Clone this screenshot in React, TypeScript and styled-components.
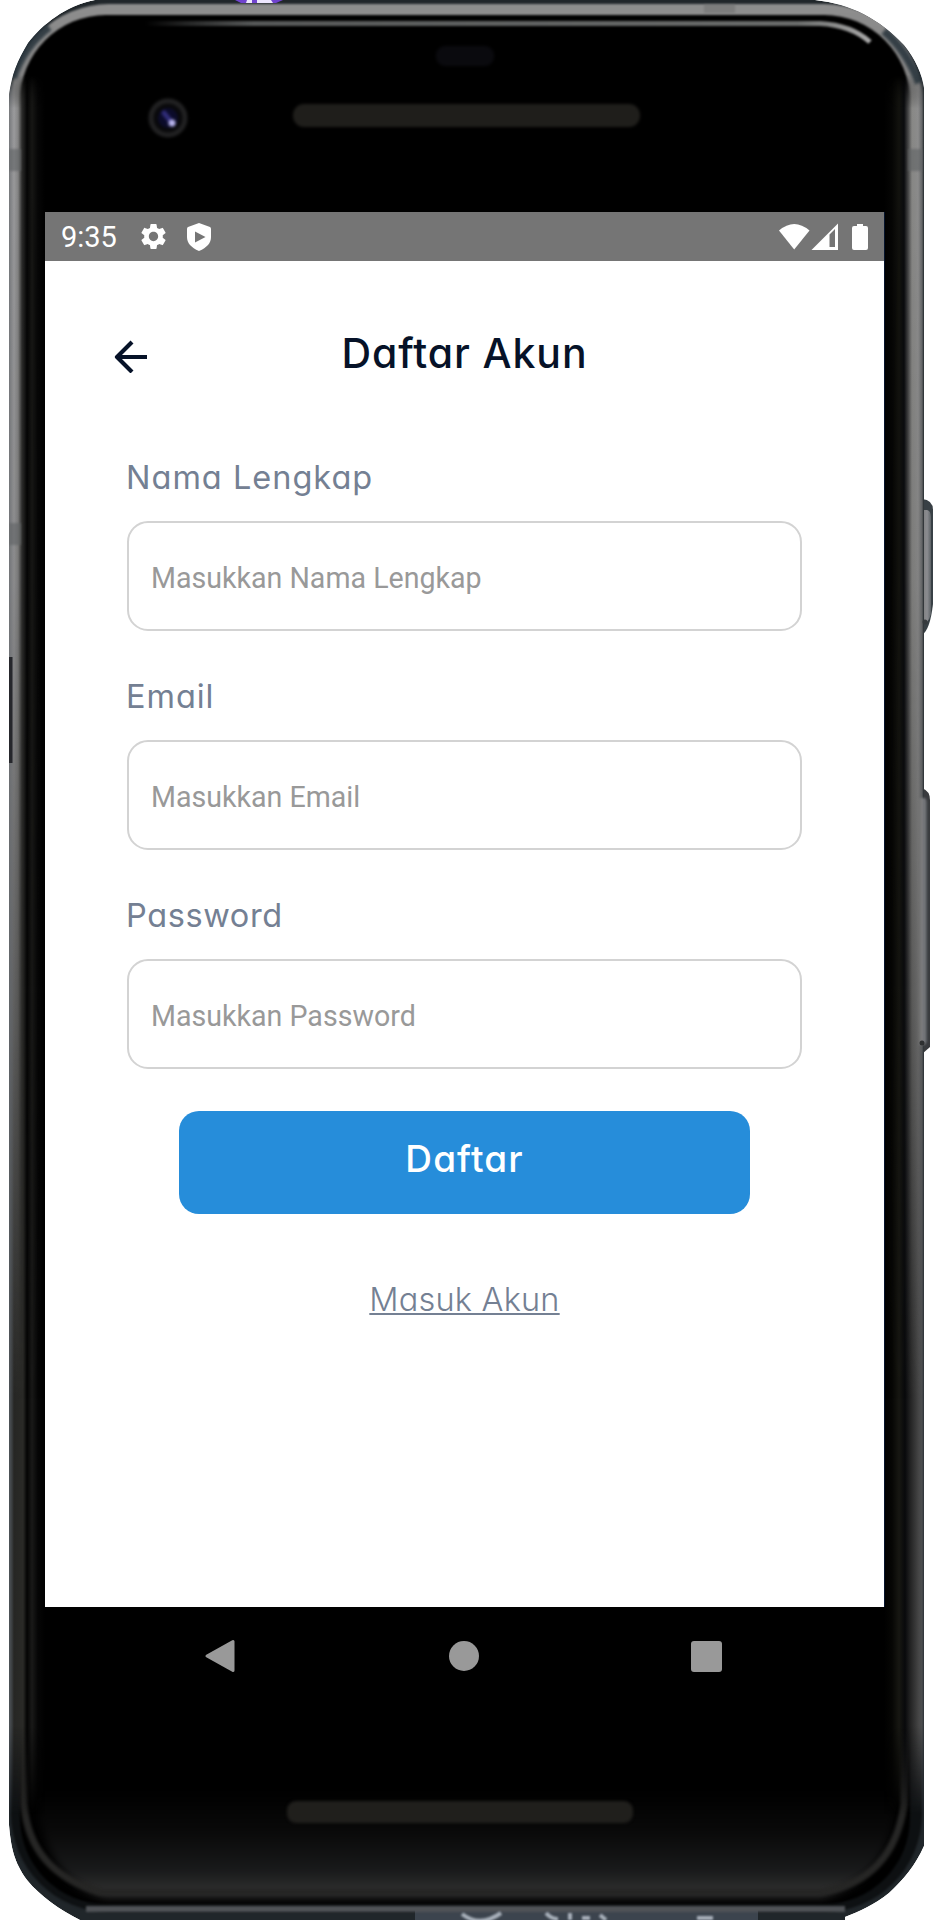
import React from 'react';
import styled, { createGlobalStyle } from 'styled-components';
import { MdSettings } from 'react-icons/md';

const GlobalStyle = createGlobalStyle`
  * { box-sizing: border-box; }
  body { margin: 0; background: #fff; overflow: hidden; }
`;

const geometric = `Inter, "Open Sans", sans-serif`;

const Device = styled.div`
  position: relative;
  width: 936px;
  height: 1920px;
  padding: 212px 52px 0 45px;
  overflow: hidden;
  background: #fff;
`;

const Hardware = styled.svg`
  position: absolute;
  inset: 0;
`;

const Viewport = styled.div`
  position: relative;
  display: flex;
  flex-direction: column;
  width: 839px;
`;

const StatusBar = styled.header`
  display: flex;
  align-items: center;
  height: 49px;
  padding: 0 16px;
  background: #757575;
  color: #fff;
`;

const Clock = styled.time`
  width: 79px;
  font: 400 29px/49px Roboto, sans-serif;
  padding-top: 2px;
`;

const StatusIcons = styled.div<{ $end?: boolean }>`
  display: flex;
  align-items: center;
  gap: ${({ $end }) => ($end ? '0' : '18px')};
  margin-left: ${({ $end }) => ($end ? 'auto' : '-2px')};
  svg { display: block; }
`;

const Screen = styled.main`
  height: 1346px;
  padding: 62px 82px 0;
  background: #fff;
`;

const TitleBar = styled.div`
  display: grid;
  grid-template-columns: 40px 1fr 40px;
  align-items: center;
  height: 60px;
  margin: 0 0 64px -16px;
  width: 707px;
`;

const BackButton = styled.button`
  display: flex;
  width: 40px;
  height: 40px;
  padding: 0;
  border: 0;
  background: none;
`;

const Title = styled.h1`
  margin: 0;
  text-align: center;
  color: #061228;
  font: 500 41px/60px ${geometric};
  font-feature-settings: 'cv11';
  letter-spacing: 0.9px;
`;

const Field = styled.label`
  display: flex;
  flex-direction: column;
  width: 675px;
  height: 219px;
`;

const FieldName = styled.span<{ $spacing: number }>`
  height: 74px;
  margin-left: -1px;
  color: #748093;
  font: 400 32.5px/61px ${geometric};
  font-feature-settings: 'cv11';
  letter-spacing: ${({ $spacing }) => $spacing}px;
`;

const FieldInput = styled.input`
  height: 110px;
  padding: 4px 22px 0;
  border: 2px solid #d3d3d3;
  border-radius: 21px;
  background: #fff;
  font: 400 28.6px Roboto, sans-serif;
  outline: none;
  &::placeholder { color: #999; opacity: 1; }
`;

const Actions = styled.div`
  display: flex;
  flex-direction: column;
  align-items: center;
  margin-top: 7px;
`;

const SubmitButton = styled.button`
  width: 571px;
  height: 103px;
  padding: 0 0 8px;
  border: 0;
  border-radius: 20px;
  background: #268dda;
  color: #fff;
  font: 500 37px ${geometric};
  font-feature-settings: 'cv11';
  letter-spacing: 1.1px;
`;

const LoginLink = styled.a`
  margin-top: 56px;
  color: #748093;
  font: 300 32.5px/60px ${geometric};
  font-feature-settings: 'cv11';
  letter-spacing: 0.2px;
  text-decoration: underline;
  text-decoration-thickness: 2px;
  text-underline-offset: 2px;
`;

const NavBar = styled.nav`
  display: flex;
  align-items: center;
  justify-content: space-between;
  height: 98px;
  padding: 0 162px 0 159px;
  svg { display: block; }
`;

const body =
  'M9 95 C12 73 17 62 28 43 C43 24 65 6 95 0 H815 C852 4 879 19 904 45 C916 60 922 74 924 88 V1846 C915 1866 904 1879 889 1893 C874 1905 860 1911 845 1917 V1920 H80 C60 1910 40 1896 27 1880 C14 1862 11 1848 9 1825 Z';

type Stops = [number, string][];

const leftUpper: Stops = [[9, '#77797c'], [14, '#9b9b9d'], [18, '#858585'], [22, '#2c2c2b'], [27, '#050505'], [32, '#161614'], [38, '#060606'], [45, '#000']];
const leftLower: Stops = [[9, '#50555a'], [12, '#3a3d3f'], [14, '#262624'], [23, '#2a2a27'], [27, '#040404'], [32, '#191918'], [38, '#050505'], [45, '#000']];
const rightUpper: Stops = [[884, '#000'], [892, '#050504'], [899, '#12120e'], [904, '#0a0b0e'], [908, '#444445'], [912, '#888886'], [918, '#8d8d8d'], [922, '#66686a'], [924, '#22282b']];
const rightLower: Stops = [[884, '#000'], [892, '#060604'], [899, '#171712'], [905, '#08090b'], [911, '#262626'], [919, '#474747'], [922, '#4b4d4f'], [924, '#2c3136']];

function RailGradient({ id, stops }: { id: string; stops: Stops }) {
  const from = stops[0][0];
  const to = stops[stops.length - 1][0];
  return (
    <linearGradient id={id} gradientUnits="userSpaceOnUse" x1={from} y1="0" x2={to} y2="0">
      {stops.map(([x, color]) => (
        <stop key={x} offset={(x - from) / (to - from)} stopColor={color} />
      ))}
    </linearGradient>
  );
}

function PhoneHardware() {
  return (
    <Hardware width="936" height="1920" viewBox="0 0 936 1920" aria-hidden="true">
      <defs>
        <clipPath id="body"><path d={body} /></clipPath>
        <RailGradient id="leftUpper" stops={leftUpper} />
        <RailGradient id="leftLower" stops={leftLower} />
        <RailGradient id="rightUpper" stops={rightUpper} />
        <RailGradient id="rightLower" stops={rightLower} />
        <linearGradient id="upperFade" gradientUnits="userSpaceOnUse" x1="0" y1="75" x2="0" y2="1400">
          <stop offset="0" stopColor="#000" />
          <stop offset=".025" stopColor="#fff" />
          <stop offset=".38" stopColor="#ddd" />
          <stop offset=".72" stopColor="#777" />
          <stop offset="1" stopColor="#000" />
        </linearGradient>
        <linearGradient id="lowerFade" gradientUnits="userSpaceOnUse" x1="0" y1="75" x2="0" y2="1850">
          <stop offset="0" stopColor="#000" />
          <stop offset=".02" stopColor="#fff" />
          <stop offset=".93" stopColor="#fff" />
          <stop offset=".98" stopColor="#000" />
        </linearGradient>
        <mask id="upper" maskUnits="userSpaceOnUse" x="0" y="0" width="936" height="1920"><rect width="936" height="1920" fill="url(#upperFade)" /></mask>
        <mask id="lower" maskUnits="userSpaceOnUse" x="0" y="0" width="936" height="1920"><rect width="936" height="1920" fill="url(#lowerFade)" /></mask>
        <linearGradient id="metal" x1="0" y1="0" x2="0" y2="1">
          <stop offset="0" stopColor="#8e8e8e" />
          <stop offset=".05" stopColor="#808080" />
          <stop offset=".6" stopColor="#626360" />
          <stop offset=".9" stopColor="#0d0f11" />
          <stop offset="1" stopColor="#0e1113" />
        </linearGradient>
        <linearGradient id="chin" gradientUnits="userSpaceOnUse" x1="0" y1="1790" x2="0" y2="1898">
          <stop offset="0" stopColor="#000" />
          <stop offset=".4" stopColor="#0a0a0a" />
          <stop offset=".75" stopColor="#191a1b" />
          <stop offset=".92" stopColor="#2d2d2d" />
          <stop offset="1" stopColor="#2c2c2c" />
        </linearGradient>
        <linearGradient id="rim" gradientUnits="userSpaceOnUse" x1="0" y1="1640" x2="0" y2="1820">
          <stop offset="0" stopColor="#262625" stopOpacity="0" />
          <stop offset="1" stopColor="#262625" />
        </linearGradient>
        <linearGradient id="key" x1="0" x2="1">
          <stop offset="0" stopColor="#777775" />
          <stop offset=".65" stopColor="#8b8c90" />
          <stop offset="1" stopColor="#5c6266" />
        </linearGradient>
        <linearGradient id="fade" gradientUnits="userSpaceOnUse" x1="145" y1="0" x2="870" y2="0">
          <stop offset="0" stopColor="#626464" stopOpacity="0" />
          <stop offset=".15" stopColor="#565858" />
          <stop offset=".9" stopColor="#6a6c6b" />
          <stop offset="1" stopColor="#aaa" />
        </linearGradient>
        <filter id="soft1" filterUnits="userSpaceOnUse" x="0" y="0" width="936" height="1920" colorInterpolationFilters="sRGB"><feGaussianBlur stdDeviation="1" /></filter>
        <filter id="soft" filterUnits="userSpaceOnUse" x="0" y="0" width="936" height="1920" colorInterpolationFilters="sRGB"><feGaussianBlur stdDeviation="1.5" /></filter>
        <filter id="soft4" filterUnits="userSpaceOnUse" x="0" y="0" width="936" height="1920" colorInterpolationFilters="sRGB"><feGaussianBlur stdDeviation="4" /></filter>
      </defs>

      <path d="M922 499 Q933 500 933 510 V604 Q930 630 922 635Z" fill="#384045" />
      <path d="M920 510 H927 Q931 511 931 517 V614 Q928 625 920 625Z" fill="url(#key)" />
      <path d="M922 788 Q930 791 930 800 V1047 L922 1054Z" fill="#393b3e" />

      <g clipPath="url(#body)">
        <path d={body} fill="#20262a" />
        <g filter="url(#soft1)">
          <rect x="11" y="4" width="911" height="1908" rx="98" fill="url(#metal)" />
          <rect x="20" y="15" width="890" height="1889" rx="86" fill="#000" />
        </g>
        <path d="M36 1770 H896 V1802 Q891 1878 822 1898 H106 Q48 1884 36 1802Z" fill="url(#chin)" filter="url(#soft4)" />
        <path d="M24 1640 V1805 Q30 1872 100 1892 H822 Q893 1880 904 1805 V1640" fill="none" stroke="url(#rim)" strokeWidth="7" filter="url(#soft)" />
        <g mask="url(#lower)">
          <rect x="9" y="0" width="36" height="1920" fill="url(#leftLower)" />
          <rect x="884" y="0" width="40" height="1920" fill="url(#rightLower)" />
        </g>
        <g mask="url(#upper)">
          <rect x="9" y="0" width="36" height="1920" fill="url(#leftUpper)" />
          <rect x="884" y="0" width="40" height="1920" fill="url(#rightUpper)" />
        </g>
        <path d="M145 23.5 H820 Q851 25 870 42" fill="none" stroke="url(#fade)" strokeWidth="5" filter="url(#soft1)" />
        <path d="M13 78 Q23 47 49 27 M884 31 Q907 51 919 83" fill="none" stroke="#26323a" strokeWidth="8" filter="url(#soft)" opacity=".85" />
        <path d="M9 149 H21 V171 H9Z M908 149 H922 V171 H908Z M9 523 H21 V545 H9Z" fill="#606365" opacity=".6" filter="url(#soft1)" />
        <rect x="9" y="657" width="3.5" height="106" fill="#26272c" />
        <rect x="704" y="4" width="31" height="9" fill="#666" opacity=".4" filter="url(#soft1)" />
        <path d="M235 0 H283 L276 3 H241Z" fill="#7043cf" />
        <path d="M247 0 H252 V3 H246Z M257 0 H271 L273 3 H257Z" fill="#eee7ff" />
        <path d="M415 1910 H758 V1920 H415Z" fill="#3c444e" />
        <path d="M86 1909 H845" stroke="#505357" strokeWidth="6" filter="url(#soft1)" />
        <path d="M462 1914 Q480 1928 501 1913 M546 1913 Q551 1919 558 1919 M570 1913 V1920 M582 1918 H590 M600 1915 L606 1920 M697 1918 H713" fill="none" stroke="#a9b1bb" strokeWidth="4" filter="url(#soft1)" />
      </g>
      <path d="M919 798 H924 Q927 798 927 804 V1040 Q927 1045 922 1045 H919Z" fill="url(#key)" opacity=".8" filter="url(#soft1)" />
      <circle cx="925" cy="622" r="2.5" fill="#363a3d" />
      <circle cx="922" cy="1043" r="2.5" fill="#2e3031" />

      <g filter="url(#soft)">
        <circle cx="168" cy="118" r="17" fill="#09090b" stroke="#212122" strokeWidth="5" />
        <circle cx="168" cy="118" r="10" fill="#0b0b2a" />
        <path d="M164 113 L173 124" stroke="#302c78" strokeWidth="5" strokeLinecap="round" />
        <circle cx="172" cy="123" r="3.5" fill="#b9b5ed" />
        <rect x="436" y="46" width="58" height="20" rx="9" fill="#0a0a0e" />
        <rect x="293" y="104" width="347" height="23" rx="11" fill="#1f1e1b" />
        <rect x="287" y="1801" width="346" height="22" rx="9" fill="#201f1c" />
      </g>
      <path d="M884.5 212 V1607" stroke="#06142c" />
    </Hardware>
  );
}

const fields = [
  { name: 'Nama Lengkap', hint: 'Masukkan Nama Lengkap', type: 'text', spacing: 1 },
  { name: 'Email', hint: 'Masukkan Email', type: 'email', spacing: 0.95 },
  { name: 'Password', hint: 'Masukkan Password', type: 'password', spacing: 0.6 },
];

export default function App() {
  return (
    <>
      <GlobalStyle />
      <Device>
        <PhoneHardware />
        <Viewport>
          <StatusBar>
            <Clock>9:35</Clock>
            <StatusIcons>
              <MdSettings size={31} />
              <svg width="24" height="28" viewBox="0 0 24 28">
                <path fillRule="evenodd" fill="#fff" d="M12 0 L23 4 Q24 4.5 24 6 V14 C24 20 20 24.5 12 28 C4 24.5 0 20 0 14 V6 Q0 4.5 1 4Z M8 8.5 V19.5 L18.5 14Z" />
              </svg>
            </StatusIcons>
            <StatusIcons $end>
              <svg width="89" height="28" viewBox="0 0 89 28" fill="#fff">
                <path d="M0 7.5 Q15.2 -5.5 30.5 7.5 L15.2 26.5Z" />
                <path fillRule="evenodd" d="M32.5 27 L59 .5 V27Z M50.5 11.5 V24 H56 V6Z" />
                <path d="M75 3 H78 V1 H84 V3 H87 Q89 3 89 5 V25 Q89 27 87 27 H75 Q73 27 73 25 V5 Q73 3 75 3Z" />
              </svg>
            </StatusIcons>
          </StatusBar>
          <Screen>
            <TitleBar>
              <BackButton aria-label="Kembali">
                <svg width="40" height="40" viewBox="0 0 40 40" fill="none" stroke="#061228" strokeWidth="4.2" strokeLinejoin="round">
                  <path d="M36 24 H6 M21 9 L6 24 L21 39" />
                </svg>
              </BackButton>
              <Title>Daftar Akun</Title>
            </TitleBar>
            {fields.map((f) => (
              <Field key={f.name}>
                <FieldName $spacing={f.spacing}>{f.name}</FieldName>
                <FieldInput type={f.type} placeholder={f.hint} />
              </Field>
            ))}
            <Actions>
              <SubmitButton>Daftar</SubmitButton>
              <LoginLink>Masuk Akun</LoginLink>
            </Actions>
          </Screen>
          <NavBar>
            <svg width="32" height="34" viewBox="0 0 32 34"><path d="M3 17 L29 2.5 V31.5Z" fill="#999" stroke="#999" strokeWidth="3" strokeLinejoin="round" /></svg>
            <svg width="30" height="30" viewBox="0 0 30 30"><circle cx="15" cy="15" r="15" fill="#999" /></svg>
            <svg width="31" height="31" viewBox="0 0 31 31"><rect width="31" height="31" rx="3" fill="#999" /></svg>
          </NavBar>
        </Viewport>
      </Device>
    </>
  );
}
